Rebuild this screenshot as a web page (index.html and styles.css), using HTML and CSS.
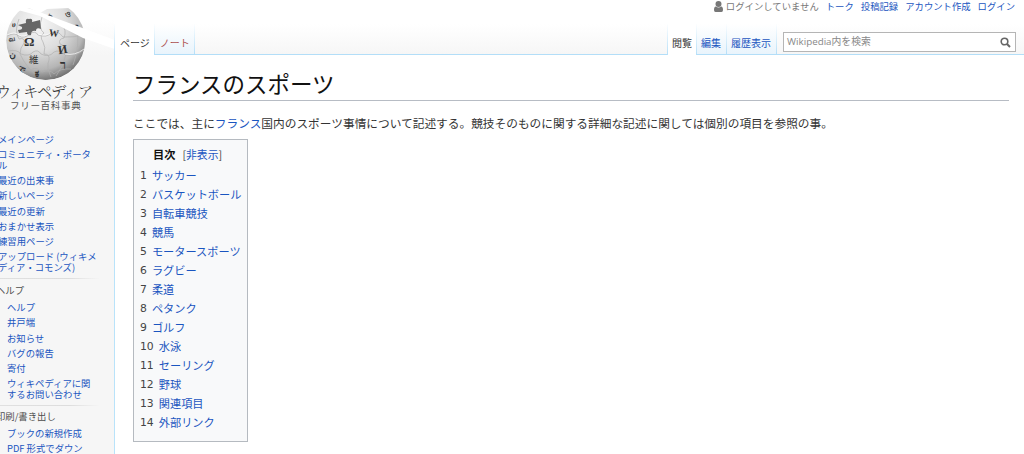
FILE: index.html
```html
<!DOCTYPE html>
<html lang="ja">
<head>
<meta charset="utf-8">
<title>フランスのスポーツ</title>
<link rel="stylesheet" href="styles.css">
</head>
<body>
<div class="page">
<aside class="sidebar">
  <a class="logo" href="#">
    <svg class="globe" viewBox="0 0 115 82" width="115" height="82">
      <defs>
        <radialGradient id="ball" cx="40%" cy="28%" r="74%"><stop offset="0" stop-color="#f8f8f8"/><stop offset=".48" stop-color="#dedede"/><stop offset=".8" stop-color="#b5b5b5"/><stop offset="1" stop-color="#707070"/></radialGradient>
        <clipPath id="round"><path d="M18 9 29 8 40 13 47 9 70 8Q86 20 85.500 41A39.500 39 0 0 1 6 41Q6 19 18 9Z"/></clipPath>
      </defs>
      <g clip-path="url(#round)">
        <circle cx="45.700" cy="40.500" r="39.500" fill="url(#ball)"/>
        <g fill="none" stroke="#b0b0b0" stroke-width=".7">
          <path d="M19 19Q14 31 19 39Q25 37 24 43Q20 48 20 54Q26 67 38 77M42 17Q38 29 44 33Q39 36 43 42Q46 47 44 54Q50 54 49 60Q46 66 51 77M62 25Q67 30 64 38Q58 39 60 44Q66 45 66 54Q64 66 56 76M77 30Q80 46 73 65"/>
          <path d="M7 36Q15 32 19 36Q24 39 30 34Q35 30 38 35Q47 38 51 33Q57 29 63 37Q74 38 85 34M8 51Q17 49 21 54Q29 57 33 52Q38 49 41 54Q49 58 54 52Q60 49 65 55Q75 57 84 50M17 67Q27 66 31 70Q36 66 42 72Q50 69 54 74Q60 68 71 69"/>
          <path d="M7 35Q15 31 19 35Q24 38 30 33M38 34Q47 37 51 32M65 54Q75 56 84 49" stroke="#fff"/>
        </g>
        <path d="M18 25 26 23Q25 18 29 19Q33 18 32 22L40 20 41 29Q36 27 36 31Q31 30 31 35Q27 36 27 32L19 33 18 30Q23 30 22 27Z" fill="#666"/>
        <g class="glyphs">
          <text x="24" y="46" font-size="13">Ω</text><text x="48.500" y="36" font-size="10" transform="rotate(8 50 35)">W</text>
          <text x="58" y="54" font-size="12" transform="rotate(-10 60 50)">И</text><text class="han" x="29" y="63" font-size="9.500">維</text>
          <text x="60" y="69" font-size="12">ר</text><text x="9" y="42" font-size="7" transform="rotate(-12 9 42)">வ</text>
          <text x="9" y="57" font-size="9" transform="rotate(12 9 55)">ن</text><text x="35" y="77" font-size="9">ಕ</text>
          <text x="46" y="18" font-size="8">ሐ</text><text x="65" y="17" font-size="8">ও</text>
          <text x="75" y="29" font-size="9">ነ</text><text x="12" y="27" font-size="7">ሀ</text>
          <text x="17" y="71" font-size="8" transform="rotate(30 18 70)">で</text>
        </g>
      </g>
      <path d="M0 0 34 10 115 40V49L83 38 40 16 18 10Z" fill="#fff"/>
    </svg>
    <span class="wordmark">ウィキペディア</span>
    <span class="tagline">フリー百科事典</span>
  </a>
  <nav class="portal portal-main">
    <ul>
      <li><a href="#">メインページ</a></li>
      <li><a href="#">コミュニティ・ポータ<br>ル</a></li>
      <li><a href="#">最近の出来事</a></li>
      <li><a href="#">新しいページ</a></li>
      <li><a href="#">最近の更新</a></li>
      <li><a href="#">おまかせ表示</a></li>
      <li><a href="#">練習用ページ</a></li>
      <li><a href="#">アップロード (ウィキメ<br>ディア・コモンズ)</a></li>
    </ul>
  </nav>
  <nav class="portal">
    <h3>ヘルプ</h3>
    <ul>
      <li><a href="#">ヘルプ</a></li>
      <li><a href="#">井戸端</a></li>
      <li><a href="#">お知らせ</a></li>
      <li><a href="#">バグの報告</a></li>
      <li><a href="#">寄付</a></li>
      <li><a href="#">ウィキペディアに関<br>するお問い合わせ</a></li>
    </ul>
  </nav>
  <nav class="portal">
    <h3>印刷/書き出し</h3>
    <ul>
      <li><a href="#">ブックの新規作成</a></li>
      <li><a href="#">PDF 形式でダウン</a></li>
    </ul>
  </nav>
</aside>
<div class="column">
  <header class="head">
    <div class="personal">
      <span class="anon"><svg width="9" height="11" viewBox="0 0 9 11"><path d="M1.500 3Q1.500 0 4.500 0T7.500 3 4.500 6 1.500 3ZM0 9Q0 5.500 1.800 5.500 4.500 7.500 7.200 5.500 9 5.500 9 9 9 11 7.500 11H1.500Q0 11 0 9Z" fill="#777"/></svg>ログインしていません</span>
      <a href="#">トーク</a><a href="#">投稿記録</a><a href="#">アカウント作成</a><a href="#">ログイン</a>
    </div>
    <div class="bar">
      <div class="tabs"><a class="tab on" href="#">ページ</a><a class="tab missing" href="#">ノート</a></div>
      <div class="tabs views"><a class="tab on" href="#">閲覧</a><a class="tab" href="#">編集</a><a class="tab" href="#">履歴表示</a></div>
      <div class="search"><span>Wikipedia内を検索</span><svg width="11" height="11" viewBox="0 0 11 11" fill="none" stroke="#666"><circle cx="4.500" cy="4.500" r="3.300" stroke-width="1.600"/><path d="m7 7 3 3" stroke-width="2"/></svg></div>
    </div>
  </header>
  <main class="content">
    <h1>フランスのスポーツ</h1>
    <p>ここでは、主に<a href="#">フランス</a>国内のスポーツ事情について記述する。競技そのものに関する詳細な記述に関しては個別の項目を参照の事。</p>
    <div class="toc">
      <div class="toc-title"><b>目次</b><span>[<a href="#">非表示</a>]</span></div>
      <ol>
        <li><span>1</span><a href="#">サッカー</a></li>
        <li><span>2</span><a href="#">バスケットボール</a></li>
        <li><span>3</span><a href="#">自転車競技</a></li>
        <li><span>4</span><a href="#">競馬</a></li>
        <li><span>5</span><a href="#">モータースポーツ</a></li>
        <li><span>6</span><a href="#">ラグビー</a></li>
        <li><span>7</span><a href="#">柔道</a></li>
        <li><span>8</span><a href="#">ペタンク</a></li>
        <li><span>9</span><a href="#">ゴルフ</a></li>
        <li><span>10</span><a href="#">水泳</a></li>
        <li><span>11</span><a href="#">セーリング</a></li>
        <li><span>12</span><a href="#">野球</a></li>
        <li><span>13</span><a href="#">関連項目</a></li>
        <li><span>14</span><a href="#">外部リンク</a></li>
      </ol>
    </div>
  </main>
</div>
</div>
</body>
</html>
```
FILE: styles.css
```css
* { box-sizing: border-box; }
body { margin: 0; overflow: hidden; font-family: "Noto Sans CJK JP", sans-serif; color: #333; background: #fff; }
a { color: #1a55c0; text-decoration: none; }
ul, ol { list-style: none; margin: 0; padding: 0; }
h1, h3, p { margin: 0; font-weight: 400; }
.page { display: flex; width: 1024px; height: 454px; overflow: hidden; }

.sidebar { width: 114px; flex: none; height: 454px; overflow: hidden; background: linear-gradient(#fff 20px, #f6f6f6 56px); }
.logo { display: flex; flex-direction: column; height: 134px; color: #333; white-space: nowrap; }
.globe { display: block; flex: none; }
.glyphs { fill: #333; font-family: "Liberation Serif", "Noto Sans CJK JP", serif; font-weight: 700; }
.glyphs .han { font-weight: 400; }
.wordmark { font: 15.3px/18px "Noto Serif CJK JP", "Noto Sans CJK JP", serif; font-weight: 300; margin: -1px 0 0 -4px; letter-spacing: -1.3px; }
.tagline { font-size: 9.6px; line-height: 12px; margin-left: 10px; letter-spacing: .6px; color: #555; }
.portal { margin-left: -2px; font-size: 9.35px; line-height: 10.4px; white-space: nowrap; }
.portal h3 { font-size: 9.35px; line-height: 12px; color: #4d4d4d; padding-top: 5px; margin: 0 0 6px -2px; }
.portal li { margin-bottom: 4.9px; }
.portal + .portal { border-top: 1px solid; border-image: linear-gradient(90deg, #e0e0e0, #ddd 70%, #f6f6f6) 1; width: 101px; }
.portal + .portal ul { padding-left: 9px; }
.portal-main { height: 144px; }
.portal-main + .portal { height: 127px; }
.portal-main + .portal + .portal h3 { padding-top: 4px; }

.column { flex: 1; min-width: 0; height: 454px; display: flex; flex-direction: column; }
.head { height: 55px; flex: none; background: linear-gradient(#fff 24px, #f6f6f6 55px); }
.personal { display: flex; justify-content: flex-end; gap: 7px; height: 24px; padding-right: 9px; font-size: 9.35px; line-height: 13px; white-space: nowrap; }
.anon { display: flex; gap: 3px; color: #777; }
.anon svg { margin-top: 1px; }
.bar { display: flex; height: 31px; border-bottom: 1px solid #b3def8; }
.tabs { display: flex; height: 31px; }
.views { margin-left: auto; }
.tab { height: 31px; padding: 11px 5px 0 4px; border-right: 1px solid; border-image: linear-gradient(#fff, #b3def8) 1; font-size: 10px; line-height: 16px; white-space: nowrap; background: linear-gradient(#fff, #e9f4fc) 0 0 / 100% 30px no-repeat; }
.tab.on { color: #333; background: #fff; }
.tab:first-child { border-left: 1px solid; }
.tabs:not(.views) .on { padding: 11px 4px 0 5px; }
.tabs:not(.views) .missing { padding: 11px 4px 0 5px; }
.views .on { padding-right: 4px; }
.tab.missing { color: #ad5050; }
.tabs .tab:not(.on) { height: 30px; }
.search { display: flex; align-items: center; justify-content: space-between; width: 233px; height: 20px; margin: 8px 8px 0 6px; padding: 0 4px 0 3px; border: 1px solid #b5b5b5; background: #fff; color: #888; font: 9.8px/18px "Open Sans", "Noto Sans CJK JP", sans-serif; }

.content { flex: 1; padding: 12px 15px 0 18px; border-left: 1px solid #b9e3fa; }
h1 { height: 34px; border-bottom: 1px solid #b7bcc4; font-size: 22.5px; line-height: 32px; color: #111; }
p { margin-top: 13px; font-size: 11.7px; line-height: 18px; height: 25px; white-space: nowrap; }
.toc { width: 115px; height: 303px; border: 1px solid #b5bac0; background: #f8f9fa; padding: 5px 0 0 6px; font-size: 11.2px; }
.toc-title { display: flex; gap: 7px; padding-left: 13px; line-height: 19px; height: 21px; color: #111; }
.toc-title span { font-size: 10.8px; color: #444; }
.toc li { display: flex; gap: 5px; line-height: 19px; white-space: nowrap; }
.toc li span { font-family: "DejaVu Sans", sans-serif; font-size: 10.8px; color: #444; }
```
